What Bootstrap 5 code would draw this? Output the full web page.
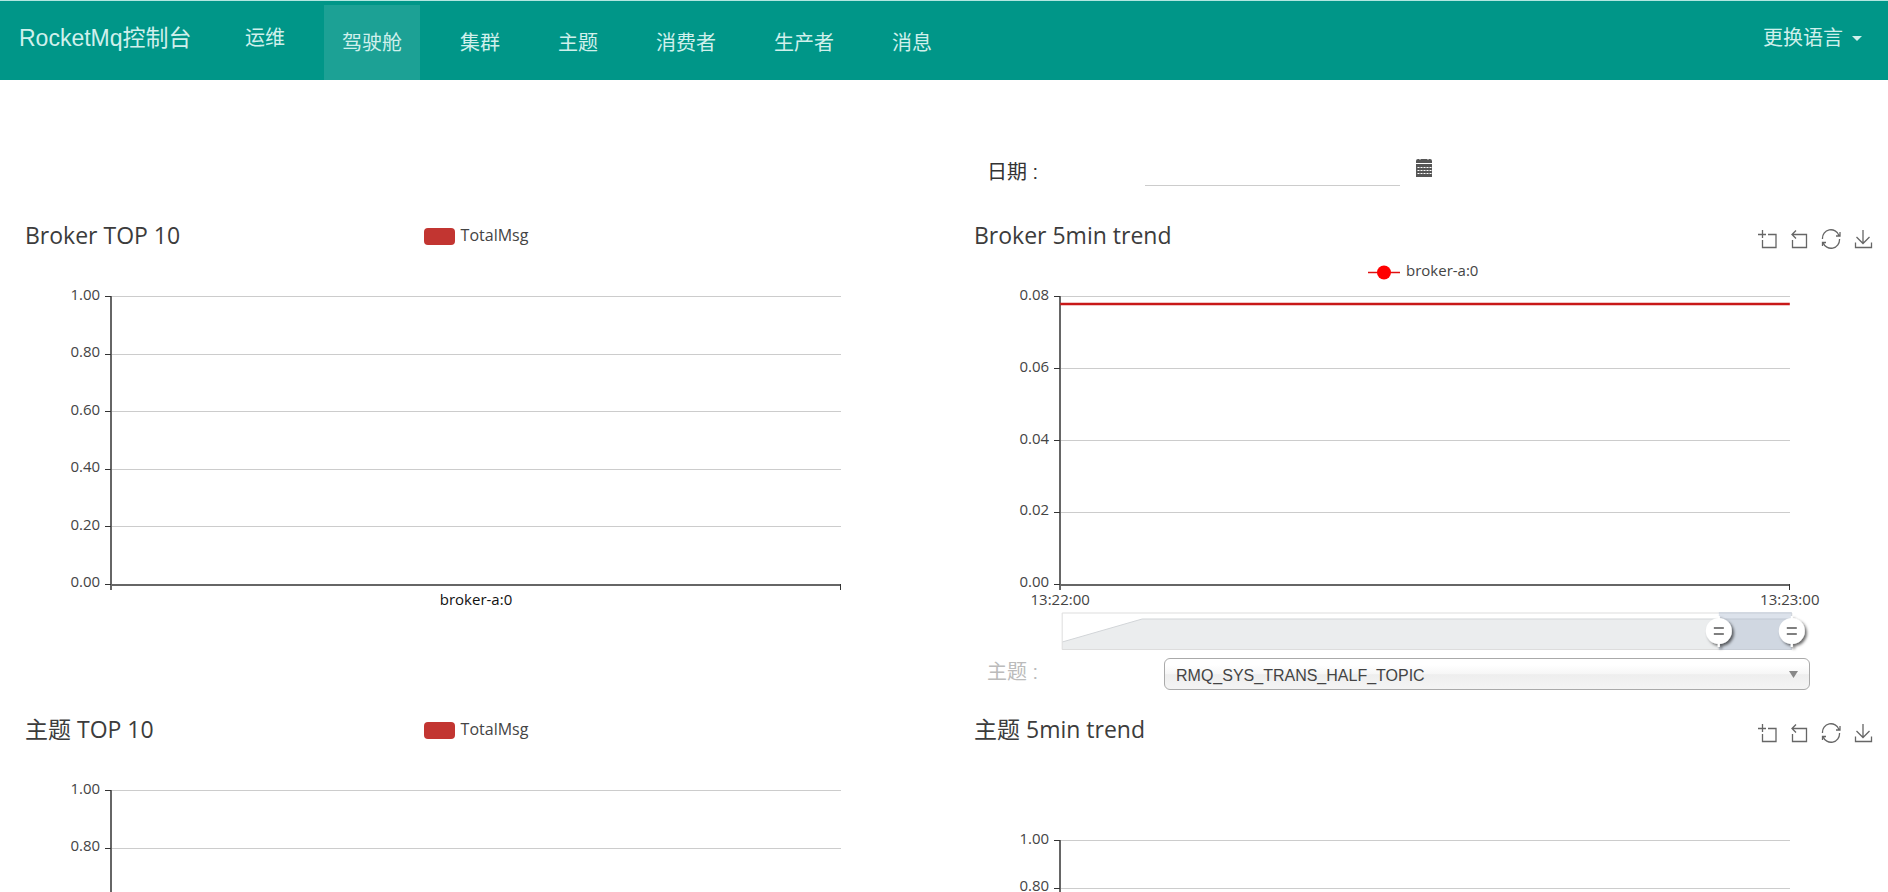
<!DOCTYPE html>
<html lang="zh-CN">
<head>
<meta charset="utf-8">
<meta name="viewport" content="width=device-width, initial-scale=1">
<title>RocketMq控制台</title>
<link href="https://cdn.jsdelivr.net/npm/bootstrap@5.3.0/dist/css/bootstrap.min.css" rel="stylesheet">
<style>
  body { font-family: "Liberation Sans", "Noto Sans CJK SC", sans-serif; height: 100vh; overflow: hidden; color: #333; background: #fff; }
  .topbar { background: #009688; border-top: 1px solid #b2e6e0; height: 80px; padding: 0 26px 0 19px; }
  .topbar a { color: #d0f0ec; font-size: 20px; line-height: 75px; padding: 0; margin: 0; white-space: nowrap; }
  .topbar .navbar-brand { font-size: 23px; width: 226px; }
  .topbar .menu { gap: 21px; padding: 4px 0 0 39px; }
  .topbar .menu .nav-link { padding: 0 18px; line-height: 76px; height: 75px; }
  .topbar .menu .nav-link + .nav-link { margin-left: 1px; }
  .topbar .menu .active { background: rgba(255,255,255,.11); color: #d0f0ec; }
  .topbar .dropdown-toggle::after { border-width: 5px 5px 0; margin-left: 9px; vertical-align: 4px; }
  .col-start { padding: 0 12px 0 20px; }
  .col-end { padding: 0 7px 0 25px; }
  .field-row label { font-size: 20px; line-height: 28px; padding-left: 18px; }
  .date-row { padding-top: 70px; margin-bottom: 30px; }
  .date-row label { width: 176px; padding-top: 8px; }
  .date-row input { width: 255px; height: 36px; border: 0; border-bottom: 1px solid #ccc; border-radius: 0; background: none; }
  .date-row button { margin: 0 0 2px 15px; line-height: 0; }
  .topic-row { margin: 4px 71px 20px 0; }
  .topic-row label { width: 195px; color: #bbb; flex: none; }
  .topic-row select { height: 32px; font-size: 16px; line-height: 20px; color: #444; padding: 3px 36px 0 11px; border: 1px solid #aaa; border-radius: 6px;
    background: url("data:image/svg+xml,%3Csvg xmlns='http://www.w3.org/2000/svg' viewBox='0 0 9 7'%3E%3Cpath d='M0 0h9L4.5 7z' fill='%23888'/%3E%3C/svg%3E") no-repeat right 11px center / 9px 7px,
      linear-gradient(#fff 20%, #f6f6f6 50%, #eee 52%, #f4f4f4 100%); }
  .chart-head { display: grid; grid-template-columns: 1fr auto 1fr; height: 40px; font-family: "Open Sans", "Noto Sans CJK SC", sans-serif; }
  .chart-head h2 { font-size: 23px; line-height: 38px; margin: 0 0 0 5px; font-weight: 400; color: #3c3c3c; }
  .plain { border: 0; background: none; padding: 0; color: #444; }
  .legend-key { font-size: 16px; line-height: 36px; height: 38px; display: flex; align-items: center; gap: 6px; }
  .swatch { width: 31px; height: 17px; border-radius: 4px; background: #c23531; margin-top: 2px; }
  .tools { grid-column: 3; display: flex; justify-content: flex-end; gap: 12px; padding: 13px 8px 0 0; }
  .tools button { height: 20px; line-height: 0; }
  .tools svg { fill: none; stroke: #666; stroke-width: 1.3; }
  .plot { display: block; width: 100%; height: 398px; overflow: visible; font-family: "Open Sans", sans-serif; font-size: 15px; }
  .plot text { fill: #444; }
  .plot .cat { fill: #111; }
  .plot svg { overflow: visible; }
  .lines { stroke: #ccc; shape-rendering: crispEdges; }
  .axes { stroke: #666; stroke-width: 2; shape-rendering: crispEdges; }
  .ticks { stroke: #333; shape-rendering: crispEdges; }
  .ylab { text-anchor: end; }
  .mid { text-anchor: middle; }
</style>
</head>
<body>
<svg width="0" height="0" class="position-absolute" aria-hidden="true">
  <symbol id="i-zoom" viewBox="0 0 20 20"><path d="M1 5.500h8M5.500 1v8M11 5.500h8v13H5.500V11"/></symbol>
  <symbol id="i-back" viewBox="0 0 20 20"><path d="M3 5.500H17.500v13H3.500V11M7 1.500L3 5.500l4 4"/></symbol>
  <symbol id="i-refresh" viewBox="0 0 20 20"><path d="M1.500 10A8.500 8.500 0 0 1 18 6.500M18.500 10A8.500 8.500 0 0 1 2 13.500M15 7h4V3M5 13.500H1.500V17"/></symbol>
  <symbol id="i-save" viewBox="0 0 20 20"><path d="M10 1v13M3.500 8l6.500 6.500L16.500 8M2.500 13.500v5H18.500v-5"/></symbol>
</svg>

<nav class="topbar navbar navbar-expand d-flex align-items-start flex-nowrap">
  <a class="navbar-brand" href="#">RocketMq控制台</a>
  <a class="text-decoration-none" href="#ops">运维</a>
  <div class="menu navbar-nav">
    <a class="nav-link active" href="#dash">驾驶舱</a>
    <a class="nav-link" href="#cluster">集群</a>
    <a class="nav-link" href="#topic">主题</a>
    <a class="nav-link" href="#consumer">消费者</a>
    <a class="nav-link" href="#producer">生产者</a>
    <a class="nav-link" href="#message">消息</a>
  </div>
  <a class="dropdown-toggle text-decoration-none ms-auto" href="#lang" data-bs-toggle="dropdown">更换语言</a>
</nav>

<main>
  <div class="row g-0">
    <div class="col-6 offset-6 col-end">
      <div class="field-row date-row d-flex align-items-center">
        <label for="date">日期 :</label>
        <input id="date" type="text">
        <button class="plain" type="button" aria-label="日期">
          <svg width="18" height="19" viewBox="0 0 18 19"><path d="M1 5V3q0-2 2-2h1q1 1.500 2 0h6q1 1.500 2 0h1q2 0 2 2v2zM1 6h16v13H1z" fill="#555"/><path d="M2.500 9.500h14M2.500 12.500h14M2.500 15.500h14" stroke="#fff" stroke-dasharray="2 1"/></svg>
        </button>
      </div>
    </div>
  </div>

  <div class="row g-0">
    <section class="col-6 col-start">
      <div class="chart-head">
        <h2>Broker TOP 10</h2>
        <button class="plain legend-key" type="button"><span class="swatch"></span>TotalMsg</button>
      </div>
      <svg class="plot">
        <svg x="10%" width="80%" height="398">
          <g class="lines"><line x2="100%" y1="40.500" y2="40.500"/><line x2="100%" y1="98.500" y2="98.500"/><line x2="100%" y1="155.500" y2="155.500"/><line x2="100%" y1="213.500" y2="213.500"/><line x2="100%" y1="270.500" y2="270.500"/></g>
          <g class="axes"><line y1="40" y2="334"/><line x2="100%" y1="329" y2="329"/></g>
          <g class="ticks"><path d="M-6 40.500h6M-6 98.500h6M-6 155.500h6M-6 213.500h6M-6 270.500h6M-6 328.500h6"/><line x1="100%" x2="100%" y1="328" y2="334"/></g>
          <g class="ylab"><text x="-11" y="44">1.00</text><text x="-11" y="101">0.80</text><text x="-11" y="159">0.60</text><text x="-11" y="216">0.40</text><text x="-11" y="274">0.20</text><text x="-11" y="331">0.00</text></g>
          <text class="mid cat" x="50%" y="349">broker-a:0</text>
        </svg>
      </svg>
    </section>

    <section class="col-6 col-end">
      <div class="chart-head">
        <h2>Broker 5min trend</h2>
        <div class="tools">
          <button class="plain" type="button" aria-label="zoom"><svg width="20" height="20"><use href="#i-zoom"/></svg></button>
          <button class="plain" type="button" aria-label="back"><svg width="20" height="20"><use href="#i-back"/></svg></button>
          <button class="plain" type="button" aria-label="restore"><svg width="20" height="20"><use href="#i-refresh"/></svg></button>
          <button class="plain" type="button" aria-label="save"><svg width="20" height="20"><use href="#i-save"/></svg></button>
        </div>
      </div>
      <svg class="plot">
        <svg x="50%" width="1" height="40">
          <path d="M-57 16.500h32" stroke="#e01010" stroke-width="1.500"/><circle cx="-41" cy="16.500" r="7" fill="#f00"/>
          <text x="-19" y="20">broker-a:0</text>
        </svg>
        <svg x="10%" width="80%" height="398">
          <g class="lines"><line x2="100%" y1="40.500" y2="40.500"/><line x2="100%" y1="112.500" y2="112.500"/><line x2="100%" y1="184.500" y2="184.500"/><line x2="100%" y1="256.500" y2="256.500"/></g>
          <g class="axes"><line y1="40" y2="334"/><line x2="100%" y1="329" y2="329"/></g>
          <g class="ticks"><path d="M-6 40.500h6M-6 112.500h6M-6 184.500h6M-6 256.500h6M-6 328.500h6"/><line x1="100%" x2="100%" y1="328" y2="334"/></g>
          <line x2="100%" y1="48" y2="48" stroke="#c81818" stroke-width="2.500"/>
          <g class="ylab"><text x="-11" y="44">0.08</text><text x="-11" y="116">0.06</text><text x="-11" y="188">0.04</text><text x="-11" y="259">0.02</text><text x="-11" y="331">0.00</text></g>
          <text class="mid" x="0" y="349">13:22:00</text>
          <text class="mid" x="100%" y="349">13:23:00</text>
          <svg x="2" y="357" width="100%" height="37">
            <svg width="100%" height="37" viewBox="0 0 730 37" preserveAspectRatio="none">
              <path d="M0 29L80 6H730V37H0z" fill="#ebedee"/>
              <path d="M0 29L80 6H730" fill="none" stroke="#d2d5d8"/>
              <path d="M0 0H730V36.500H0z" fill="none" stroke="#ddd"/>
              <path d="M657-1H730V37H657z" fill="#a7b7cc" fill-opacity=".4"/>
            </svg>
            <g filter="url(#shade)">
              <svg x="90%" width="1" height="37"><circle cy="18" r="13" fill="#fff"/><path d="M0 3V34" stroke="#fff" stroke-width="2"/></svg>
              <svg x="100%" width="1" height="37"><circle cy="18" r="13" fill="#fff"/><path d="M0 3V34" stroke="#fff" stroke-width="2"/></svg>
            </g>
            <svg x="90%" width="1" height="37"><path d="M-5 15h10M-5 21h10" stroke="#555" stroke-width="1.500"/></svg>
            <svg x="100%" width="1" height="37"><path d="M-5 15h10M-5 21h10" stroke="#555" stroke-width="1.500"/></svg>
          </svg>
        </svg>
        <filter id="shade" x="-10%" y="-30%" width="150%" height="180%"><feDropShadow dx="2" dy="2" stdDeviation="1.500" flood-color="#000" flood-opacity=".6"/></filter>
      </svg>
      <div class="field-row topic-row d-flex">
        <label for="topic">主题 :</label>
        <select id="topic" class="form-select flex-grow-1"><option>RMQ_SYS_TRANS_HALF_TOPIC</option></select>
      </div>
    </section>
  </div>

  <div class="row g-0">
    <section class="col-6 col-start">
      <div class="chart-head">
        <h2>主题 TOP 10</h2>
        <button class="plain legend-key" type="button"><span class="swatch"></span>TotalMsg</button>
      </div>
      <svg class="plot">
        <svg x="10%" width="80%" height="398">
          <g class="lines"><line x2="100%" y1="40.500" y2="40.500"/><line x2="100%" y1="98.500" y2="98.500"/></g>
          <g class="axes"><line y1="40" y2="334"/></g>
          <g class="ticks"><path d="M-6 40.500h6M-6 98.500h6"/></g>
          <g class="ylab"><text x="-11" y="44">1.00</text><text x="-11" y="101">0.80</text></g>
        </svg>
      </svg>
    </section>
    <section class="col-6 col-end">
      <div class="chart-head">
        <h2>主题 5min trend</h2>
        <div class="tools">
          <button class="plain" type="button" aria-label="zoom"><svg width="20" height="20"><use href="#i-zoom"/></svg></button>
          <button class="plain" type="button" aria-label="back"><svg width="20" height="20"><use href="#i-back"/></svg></button>
          <button class="plain" type="button" aria-label="restore"><svg width="20" height="20"><use href="#i-refresh"/></svg></button>
          <button class="plain" type="button" aria-label="save"><svg width="20" height="20"><use href="#i-save"/></svg></button>
        </div>
      </div>
      <svg class="plot">
        <svg x="10%" width="80%" height="398">
          <g class="lines"><line x2="100%" y1="90.500" y2="90.500"/><line x2="100%" y1="138.500" y2="138.500"/></g>
          <g class="axes"><line y1="90" y2="334"/></g>
          <g class="ticks"><path d="M-6 90.500h6M-6 138.500h6"/></g>
          <g class="ylab"><text x="-11" y="94">1.00</text><text x="-11" y="141">0.80</text></g>
        </svg>
      </svg>
    </section>
  </div>
</main>
<script src="https://cdn.jsdelivr.net/npm/bootstrap@5.3.0/dist/js/bootstrap.bundle.min.js"></script>
</body>
</html>
